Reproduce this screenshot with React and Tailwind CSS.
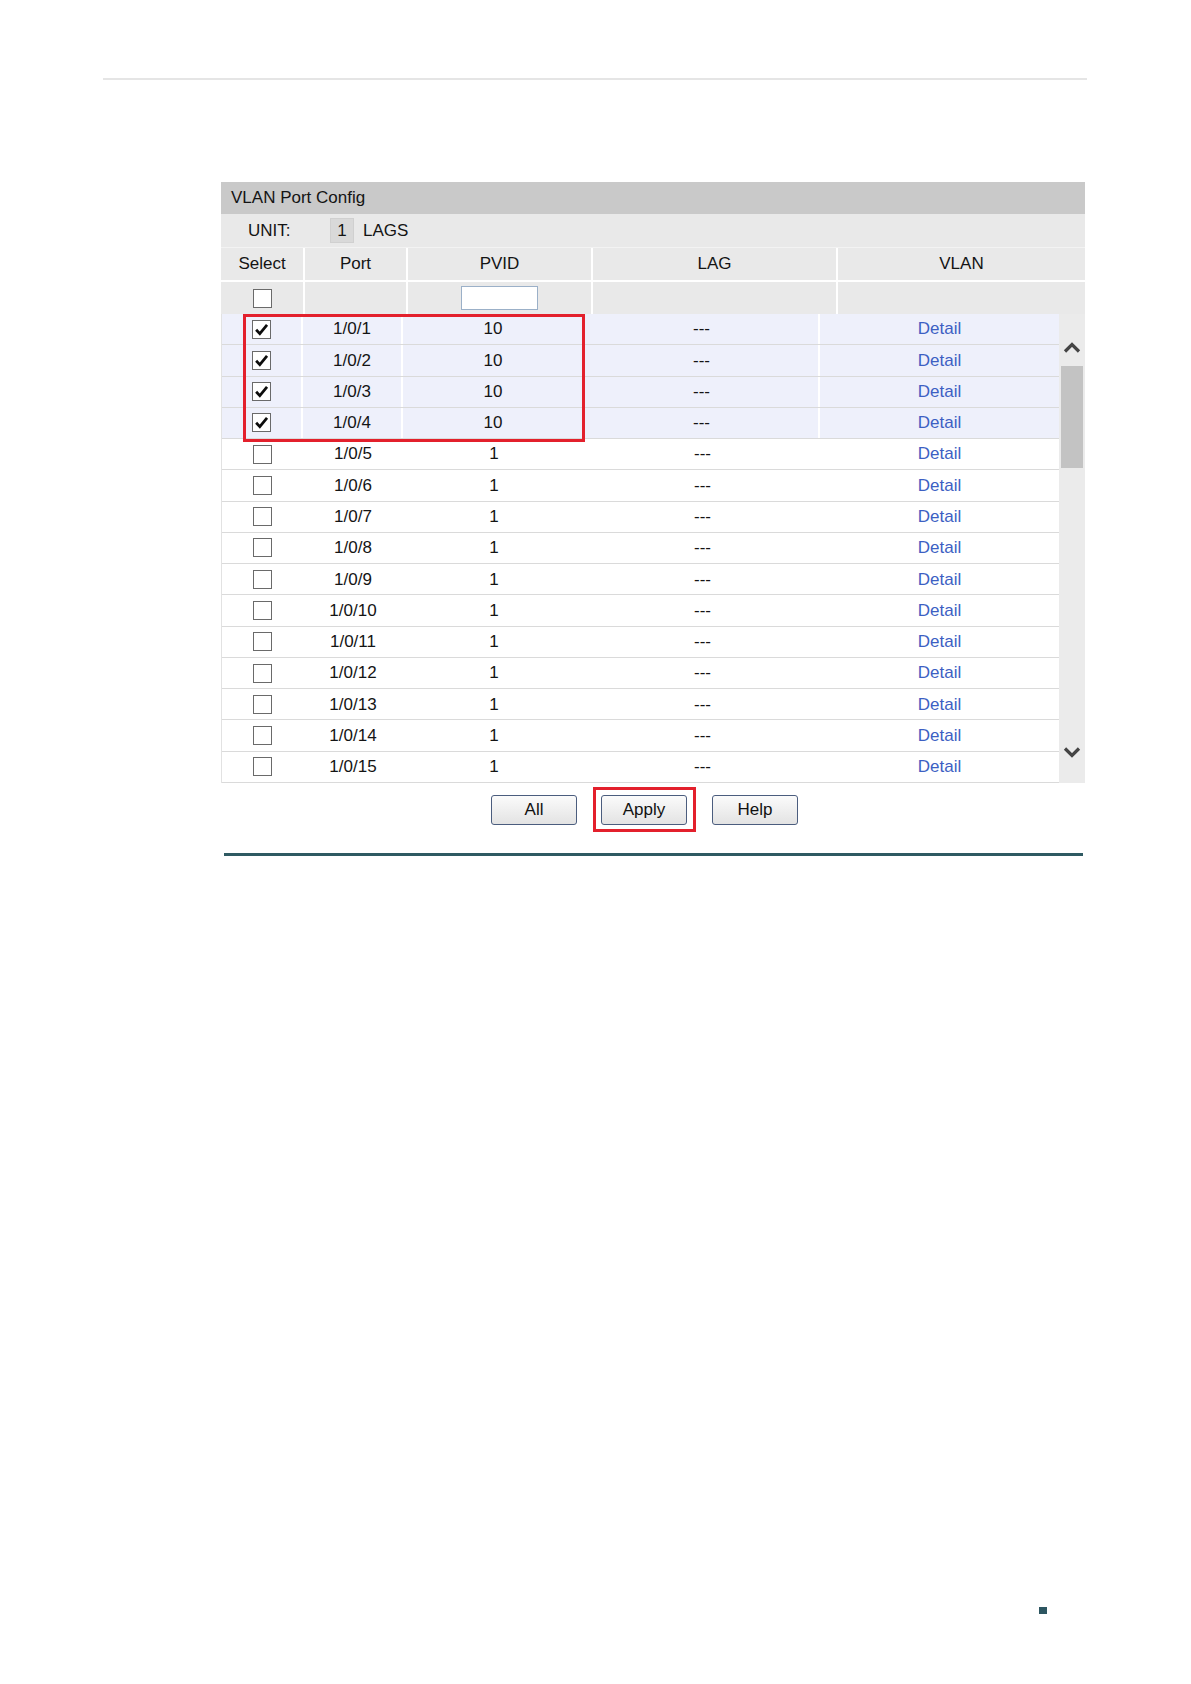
const rows = Array.from({ length: 15 }, (_, i) => ({
  port: `1/0/${i + 1}`,
  pvid: i < 4 ? "10" : "1",
  checked: i < 4,
}));

function CheckBox({ checked }) {
  return (
    <span className="flex h-[19px] w-[19px] items-center justify-center border border-[#6a6a6a] bg-white">
      {checked && (
        <svg viewBox="0 0 16 16" className="h-[15px] w-[15px]">
          <path d="M2.3 8.3 L6.2 12.4 L13.9 3" fill="none" stroke="#0c0c0c" strokeWidth="2.9" />
        </svg>
      )}
    </span>
  );
}

function Btn({ children }) {
  return (
    <button
      type="button"
      className="h-[30px] w-[86px] rounded-[3px] border border-[#4b5d7e] bg-gradient-to-b from-[#fbfbfb] to-[#e3e3e3] text-[17px] text-[#111]"
    >
      {children}
    </button>
  );
}

export default function App() {
  return (
    <div className="relative h-[1684px] w-[1191px] bg-white pt-[78px] text-[17px] text-[#141414] [font-family:'Liberation_Sans',Arial,sans-serif]">
      <div className="ml-[103px] h-[2px] w-[984px] bg-[#e5e5e5]" />

      <div className="ml-[221px] mt-[102px] w-[864px]">
        <div className="flex h-[32px] items-center bg-[#c9c9c9] px-[10px]">VLAN Port Config</div>
        <div className="flex h-[34px] items-center border-b border-[#f3f3f3] bg-[#e9e9e9]">
          <span className="ml-[27px] w-[82px]">UNIT:</span>
          <span className="flex h-[25px] w-[24px] items-center justify-center border border-[#d0d0d0] bg-[#d9d9d9]">1</span>
          <span className="ml-[9px]">LAGS</span>
        </div>
        <div className="grid h-[32px] grid-cols-[84px_103px_185px_245px_247px] bg-[#e9e9e9]">
          {["Select", "Port", "PVID", "LAG", "VLAN"].map((h, i) => (
            <div
              key={h}
              className={`flex items-center justify-center ${i < 4 ? "border-r-2 border-white" : ""}`}
            >
              {h}
            </div>
          ))}
        </div>
        <div className="grid h-[34px] grid-cols-[84px_103px_185px_245px_247px] border-t-2 border-white bg-[#e9e9e9]">
          <div className="flex items-center justify-center border-r-2 border-white">
            <CheckBox />
          </div>
          <div className="border-r-2 border-white" />
          <div className="flex items-center justify-center border-r-2 border-white">
            <input className="h-[24px] w-[77px] border border-[#9bb0c8] bg-white" />
          </div>
          <div className="border-r-2 border-white" />
          <div />
        </div>

        <div className="relative flex">
          <div className="w-[838px] border-l border-[#e2e2e2]">
            {rows.map((r) => (
              <div
                key={r.port}
                className={`grid h-[31.27px] grid-cols-[81px_100px_182px_235px_239px] border-b border-[#dadada] ${r.checked ? "bg-[#eef0fb]" : "bg-white"}`}
              >
                <div className={`flex items-center justify-center ${r.checked ? "border-r-2 border-white" : ""}`}>
                  <CheckBox checked={r.checked} />
                </div>
                <div className={`flex items-center justify-center ${r.checked ? "border-r-2 border-white" : ""}`}>{r.port}</div>
                <div className={`flex items-center justify-center ${r.checked ? "border-r-2 border-white" : ""}`}>{r.pvid}</div>
                <div className={`flex items-center justify-center ${r.checked ? "border-r-2 border-white" : ""}`}>---</div>
                <div className="flex items-center justify-center text-[#3d5fc3]">Detail</div>
              </div>
            ))}
          </div>
          <div className="flex w-[26px] flex-col bg-[#ebebeb]">
            <div className="flex h-[52px] items-start justify-center pt-[28px]">
              <svg viewBox="0 0 18 11" className="h-[11px] w-[18px]">
                <path d="M2 9.5 L9 2.5 L16 9.5" fill="none" stroke="#454545" strokeWidth="3.2" />
              </svg>
            </div>
            <div className="mx-[2px] h-[102px] bg-[#c3c3c3]" />
            <div className="flex-1" />
            <div className="flex h-[66px] items-start justify-center pt-[30px]">
              <svg viewBox="0 0 18 11" className="h-[11px] w-[18px]">
                <path d="M2 1.5 L9 8.5 L16 1.5" fill="none" stroke="#454545" strokeWidth="3.2" />
              </svg>
            </div>
          </div>
          <div className="pointer-events-none absolute left-[22px] top-0 h-[128px] w-[342px] border-[3px] border-[#e3202c]" />
        </div>

        <div className="ml-[270px] mt-[12px] flex gap-[24px]">
          <Btn>All</Btn>
          <div className="relative">
            <Btn>Apply</Btn>
            <div className="pointer-events-none absolute -bottom-[7px] -left-[8px] -right-[9px] -top-[8px] border-[3px] border-[#e3202c]" />
          </div>
          <div className="ml-[1px]">
            <Btn>Help</Btn>
          </div>
        </div>
      </div>

      <div className="ml-[224px] mt-[28px] h-[3px] w-[859px] bg-[#2f5a62]" />
      <div className="ml-[1039px] mt-[751px] h-[7px] w-[8px] bg-[#2d5661]" />
    </div>
  );
}
